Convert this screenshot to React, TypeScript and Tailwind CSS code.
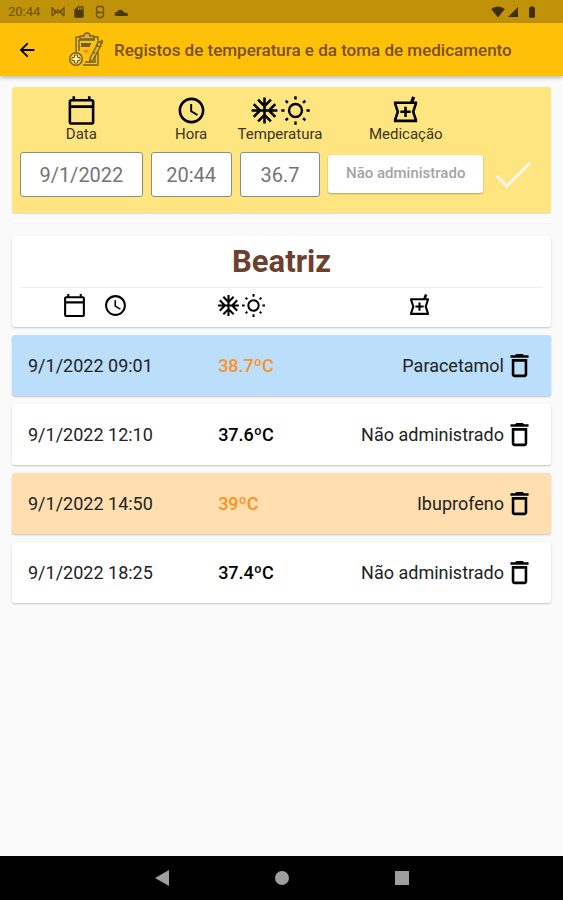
import { useState } from "react";
import {
  MdAccessTime,
  MdAcUnit,
  MdArrowBack,
  MdBatteryFull,
  MdDeleteOutline,
  MdOutlineCalendarToday,
  MdOutlineLocalPharmacy,
  MdSdCard,
  MdSignalCellular4Bar,
  MdSignalWifi4Bar,
} from "react-icons/md";

type Entry = {
  id: number;
  when: string;
  temp: string;
  medication: string;
  rowClass: string;
  fever: boolean;
};

const initialEntries: Entry[] = [
  { id: 1, when: "9/1/2022 09:01", temp: "38.7ºC", medication: "Paracetamol", rowClass: "bg-[#bbdefb]", fever: true },
  { id: 2, when: "9/1/2022 12:10", temp: "37.6ºC", medication: "Não administrado", rowClass: "bg-white", fever: false },
  { id: 3, when: "9/1/2022 14:50", temp: "39ºC", medication: "Ibuprofeno", rowClass: "bg-[#ffdeb0]", fever: true },
  { id: 4, when: "9/1/2022 18:25", temp: "37.4ºC", medication: "Não administrado", rowClass: "bg-white", fever: false },
];

const cardShadow = "shadow-[0_1px_2px_rgba(0,0,0,0.22)]";
const inputClass =
  "h-[45px] w-full rounded-[3px] border border-[#8b8b8b] bg-white text-center text-xl text-[#757575] outline-none";
const labelClass = "flex flex-col items-center text-[15px] leading-4 whitespace-nowrap text-[#3a3423]";

function StatusBar() {
  return (
    <div className="flex h-[23px] items-center justify-between bg-[#bf9209] pr-6 pl-2 text-[#6b540a]">
      <div className="flex items-center">
        <span className="text-[13px] leading-4">20:44</span>
        <svg className="ml-2.5 h-3.5 w-4" viewBox="0 0 16 14" fill="none" stroke="currentColor" strokeWidth="1.3">
          <path d="M2 11V3l6 5 6-5v8M2 11l6-6 6 6M4.500 5v4M11.500 5v4" />
        </svg>
        <MdSdCard className="ml-1.5 size-3.5 text-[#4a3a06]" />
        <svg className="ml-2 h-3.5 w-3" viewBox="0 0 12 14" fill="none" stroke="currentColor" strokeWidth="1.3">
          <path d="M2.500 5V3.500a2 2 0 0 1 2-2h3a2 2 0 0 1 2 2V10a2.500 2.500 0 0 1-2.500 2.500H5A2.500 2.500 0 0 1 2.500 10V7.500h7M2.500 5l2 2.500" />
        </svg>
        <svg className="ml-2 h-3.5 w-3.5 text-[#4a3a06]" viewBox="0 0 14 14" fill="currentColor">
          <path d="M2.500 11a2 2 0 0 1 0-4h.5a3.500 3.500 0 0 1 6.200-.8L11 8a2 2 0 0 1 2.500 3z" />
        </svg>
      </div>
      <div className="flex items-center text-[#3d3005]">
        <MdSignalWifi4Bar className="size-3.5" />
        <MdSignalCellular4Bar className="ml-0.5 size-3" />
        <MdBatteryFull className="ml-1.5 size-3.5" />
      </div>
    </div>
  );
}

function ClipboardLogo() {
  return (
    <svg className="h-9 w-9" viewBox="0 0 36 36" fill="none" stroke="#76601c" strokeWidth="1.4" strokeLinejoin="round">
      <path d="M8 20V5h22v3M30 20v13H15" fill="#f3c02c" />
      <path d="M11 19V8h16M27 21v9H17" />
      <path d="M12 7V4h4a3 3 0 0 1 6 0h4v3z" fill="#d8b04a" />
      <path d="M13 12h10M13 14h9" strokeWidth="1.8" />
      <path d="M30 9l3 1.500v3L25 28l-3 2v-4l7-13z" fill="#e6b52d" />
      <path d="M28 13l4 2M33 8l1.500 1-1 3M25 20l2 1" />
      <circle cx="8" cy="27" r="6.300" fill="#f6ca4c" />
      <path d="M6.500 23h3v2.500H12v3H9.500V31h-3v-2.500H4v-3h2.500z" fill="#fff0b3" strokeWidth="1" />
      <path d="M18 22l-2.500-2.500a1.500 1.500 0 0 1 2.500-1.500 1.500 1.500 0 0 1 2.500 1.500z" fill="#f58a3c" stroke="none" />
    </svg>
  );
}

function SunIcon({ className }: { className: string }) {
  return (
    <svg className={className} viewBox="0 0 24 24" fill="none" stroke="currentColor" strokeWidth="1.9">
      <circle cx="12" cy="12" r="5" />
      <path d="M12 1v2.500M12 20.500V23M1 12h2.500M20.500 12H23M4.400 4.400l1.700 1.700M17.900 17.900l1.700 1.700M4.400 19.600l1.700-1.700M17.900 6.100l1.700-1.700" />
    </svg>
  );
}

function TemperatureIcons({ small = false }: { small?: boolean }) {
  const size = small ? "size-[25px]" : "size-[31px]";
  return (
    <span className="flex">
      <MdAcUnit className={size} />
      <SunIcon className={size} />
    </span>
  );
}

function NewEntryForm() {
  return (
    <form
      className="grid grid-cols-[minmax(0,123fr)_minmax(0,81fr)_minmax(0,81fr)_minmax(0,155fr)_minmax(0,44fr)] items-end gap-x-2 rounded-[3px] bg-[#ffe57f] pt-2 pr-4 pb-4 pl-2 text-black shadow-[0_1px_1px_rgba(0,0,0,0.12)]"
      onSubmit={(e) => e.preventDefault()}
    >
      <label htmlFor="date" className={labelClass}>
        <MdOutlineCalendarToday className="size-[31px] text-black" />
        Data
      </label>
      <label htmlFor="time" className={labelClass}>
        <MdAccessTime className="size-[31px] text-black" />
        Hora
      </label>
      <label htmlFor="temperature" className={labelClass}>
        <span className="text-black">
          <TemperatureIcons />
        </span>
        Temperatura
      </label>
      <label htmlFor="medication" className={labelClass}>
        <MdOutlineLocalPharmacy className="size-[31px] text-black" />
        Medicação
      </label>
      <span />
      <div className="mt-2.5">
        <input id="date" className={inputClass} defaultValue="9/1/2022" />
      </div>
      <input id="time" className={inputClass} defaultValue="20:44" />
      <input id="temperature" className={inputClass} defaultValue="36.7" />
      <button
        id="medication"
        type="button"
        className="mt-2 h-[38px] self-center rounded-[3px] bg-white text-[15px] font-medium whitespace-nowrap text-[#a3a3a3] shadow-[0_1px_2px_rgba(0,0,0,0.3)]"
      >
        Não administrado
      </button>
      <button type="submit" aria-label="Guardar" className="flex h-[45px] items-center justify-center text-[#f5f5f5]">
        <svg className="size-[46px] shrink-0" viewBox="0 0 24 24" fill="none" stroke="currentColor" strokeWidth="1.5">
          <path d="M3.500 12.500l5.300 5.300L20.800 5.700" />
        </svg>
      </button>
    </form>
  );
}

function EntriesTable() {
  const [entries, setEntries] = useState(initialEntries);

  return (
    <table className="block">
      <thead className={`block rounded-[3px] bg-white px-2 ${cardShadow}`}>
        <tr className="block border-b border-[#f0f0f0]">
          <th colSpan={3} className="block pt-2 pb-[7px] text-[31px] leading-9 font-bold text-[#6d3f2c]">
            Beatriz
          </th>
        </tr>
        <tr className="grid h-[39px] grid-cols-[150fr_142fr_216fr] items-center pr-4 pb-1">
          <th className="flex justify-center gap-4" aria-label="Data e hora">
            <MdOutlineCalendarToday className="size-[25px]" />
            <MdAccessTime className="size-[25px]" />
          </th>
          <th className="flex justify-center" aria-label="Temperatura">
            <TemperatureIcons small />
          </th>
          <th className="flex justify-center" aria-label="Medicação">
            <MdOutlineLocalPharmacy className="size-[25px]" />
          </th>
        </tr>
      </thead>
      <tbody className="mt-2 flex flex-col gap-2">
        {entries.map((entry) => (
          <tr
            key={entry.id}
            className={`grid h-[61px] grid-cols-[3fr_5fr] items-center rounded-[3px] px-4 text-lg text-[#222] ${cardShadow} ${entry.rowClass}`}
          >
            <td>{entry.when}</td>
            <td className="flex items-center justify-between">
              <span className={entry.fever ? "font-medium text-[#ff9122]" : "font-medium text-black"}>
                {entry.temp}
              </span>
              <span className="flex items-center">
                {entry.medication}
                <button
                  type="button"
                  aria-label="Eliminar"
                  className="text-black"
                  onClick={() => setEntries(entries.filter((e) => e.id !== entry.id))}
                >
                  <MdDeleteOutline className="size-[31px]" />
                </button>
              </span>
            </td>
          </tr>
        ))}
      </tbody>
    </table>
  );
}

function NavigationBar() {
  return (
    <nav className="flex h-11 items-center justify-center gap-[104px] bg-black text-[#9e9e9e]">
      <button type="button" aria-label="Voltar">
        <svg className="size-4" viewBox="0 0 16 16" fill="currentColor">
          <path d="M15 0v16L1 8z" />
        </svg>
      </button>
      <button type="button" aria-label="Início">
        <svg className="size-4" viewBox="0 0 16 16" fill="currentColor">
          <circle cx="8" cy="8" r="7" />
        </svg>
      </button>
      <button type="button" aria-label="Recentes">
        <svg className="size-4" viewBox="0 0 16 16" fill="currentColor">
          <path d="M1 1h14v14H1z" />
        </svg>
      </button>
    </nav>
  );
}

export default function App() {
  return (
    <div className="flex min-h-screen flex-col bg-[#fafafa] font-['Roboto',sans-serif]">
      <StatusBar />
      <header className="flex h-[53px] items-center bg-[#ffc107] px-4 shadow-[0_2px_4px_rgba(0,0,0,0.25)]">
        <button type="button" aria-label="Voltar">
          <MdArrowBack className="size-[22px]" />
        </button>
        <div className="ml-[30px] flex items-center gap-2.5">
          <ClipboardLogo />
          <h1 className="text-[17px] leading-6 font-medium whitespace-nowrap text-[#795020]">
            Registos de temperatura e da toma de medicamento
          </h1>
        </div>
      </header>
      <main className="flex-1 px-3 pt-[11px]">
        <NewEntryForm />
        <hr className="mt-2.5 mb-3 border-[#f3f3f3]" />
        <EntriesTable />
      </main>
      <NavigationBar />
    </div>
  );
}
